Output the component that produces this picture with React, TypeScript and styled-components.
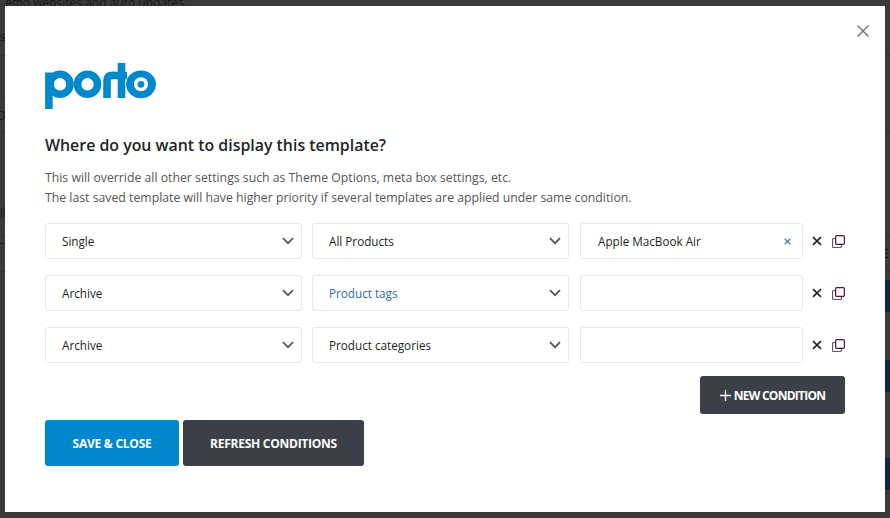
import React from "react";
import styled, {createGlobalStyle} from "styled-components";

const GlobalStyle = createGlobalStyle`
  html, body {
    margin: 0;
    padding: 0;
    height: 100%;
    overflow: hidden;
    background: #3a3a3a;
    font-family: "Open Sans", "Liberation Sans", sans-serif;
  }
  * {
    box-sizing: border-box;
  }
`

// the dimmed page behind the modal, only its edges show
const Backdrop = styled.div`
  position: fixed;
  inset: 0;
  overflow: hidden;
  display: flex;
  justify-content: space-between;
  background: #3a3a3a;
`

const BackdropEdge = styled.div`
  width: 5px;
  display: flex;
  flex-direction: column;
`

const Segment = styled.div<{ $height: number, $line?: string, $fill?: string }>`
  height: ${p => p.$height}px;
  flex-shrink: 0;
  border-bottom: ${p => p.$line ? `1px solid ${p.$line}` : "0"};
  background: ${p => p.$fill || "transparent"};
`

const SegmentText = styled.div<{ $top: number, $left: number }>`
  margin: ${p => p.$top}px 0 0 ${p => p.$left}px;
  font-size: 12px;
  line-height: 18px;
  white-space: nowrap;
  color: #161616;
`

const MenuDashes = styled.div`
  padding-top: 13px;
  display: flex;
  flex-direction: column;
  gap: 3px;
`

const MenuDash = styled.div`
  width: 3px;
  height: 1px;
  background: #111;
`

const Overlay = styled.div`
  position: fixed;
  inset: 0;
  padding: 6px 5px;
`

const Modal = styled.div`
  position: relative;
  width: 880px;
  height: 506px;
  background: #fff;
  padding: 57px 40px 0;
`

const CloseButton = styled.button`
  position: absolute;
  top: 17px;
  right: 14px;
  width: 16px;
  height: 16px;
  padding: 0;
  border: 0;
  background: none;
  display: flex;
  align-items: center;
  justify-content: center;
  color: #777;
`

const Logo = styled.svg`
  display: block;
  width: 112px;
  height: 47px;
`

const Title = styled.h2`
  margin: 23px 0 0;
  font-size: 15.9px;
  line-height: 24px;
  font-weight: 600;
  color: #222529;
`

const Description = styled.p`
  margin: 11px 0 0;
  font-size: 12.27px;
  line-height: 20px;
  color: #555;
`

const Rows = styled.div`
  margin-top: 15px;
  display: flex;
  flex-direction: column;
  gap: 16px;
`

const Row = styled.div`
  display: grid;
  grid-template-columns: 267px 268px 223px auto;
  align-items: center;
`

const Field = styled.div<{ $accent?: boolean, $input?: boolean }>`
  width: ${p => p.$input ? 223 : 257}px;
  height: 36px;
  padding: 0 ${p => p.$input ? 11 : 7}px 0 ${p => p.$input ? 17 : 16}px;
  display: flex;
  align-items: center;
  justify-content: space-between;
  border: 1px solid #e7e7e7;
  border-radius: 3px;
  font-size: 11.7px;
  font-weight: 500;
  color: ${p => p.$accent ? "#2f6cab" : "#1c1f23"};
`

const RowActions = styled.div`
  display: flex;
  align-items: center;
  gap: 10px;
  margin-left: 9px;
`

const IconButton = styled.span`
  display: flex;
  align-items: center;
  justify-content: center;
  line-height: 0;
`

const ConditionFooter = styled.div`
  margin-top: 13px;
  display: flex;
  justify-content: flex-end;
`

const Button = styled.button<{ $primary?: boolean, $tight?: boolean, $height: number, $width: number }>`
  width: ${p => p.$width}px;
  height: ${p => p.$height}px;
  padding: 0;
  display: flex;
  align-items: center;
  justify-content: center;
  gap: 3px;
  border: 0;
  border-radius: 3px;
  background: ${p => p.$primary ? "#0088cc" : "#3a3f48"};
  color: #fff;
  font-family: inherit;
  font-size: 12px;
  font-weight: 700;
  letter-spacing: ${p => p.$tight ? "-0.76px" : "-0.25px"};
`

const Actions = styled.div`
  margin-top: 6px;
  display: flex;
  gap: 4px;
`

const Chevron = () => (
  <svg width="12" height="8" viewBox="0 0 12 8" fill="none">
    <path d="M1 1.2 6 6.2 11 1.2" stroke="#555" strokeWidth="1.7"/>
  </svg>
)

const CrossIcon = () => (
  <svg width="10" height="10" viewBox="0 0 10 10" fill="none">
    <path d="M1 1.2 9 8.8M9 1.2 1 8.8" stroke="#1d2327" strokeWidth="1.6"/>
  </svg>
)

const CopyIcon = () => (
  <svg width="13" height="13" viewBox="0 0 13 13" fill="none">
    <path d="M3.5 3.5H1.7C1 3.5.5 4 .5 4.7v6.6c0 .7.5 1.2 1.2 1.2h6.6c.7 0 1.2-.5 1.2-1.2V9.5" stroke="#5a5a5a" strokeWidth="1.2"/>
    <rect x="3.6" y=".6" width="8.8" height="8.8" rx="1.2" stroke="#54123a" strokeWidth="1.2"/>
  </svg>
)

const GREY_LINE = "#303030";
const NAVY_LINE = "#173a55";
const NAVY_FILL = "#13253a";

const leftEdge = [
  {height: 28, text: "emo websites and auto updates.", top: -6, left: 5},
  {height: 28, line: GREY_LINE, text: "s", top: 0, left: 0},
  {height: 42, line: GREY_LINE},
  {height: 35, line: GREY_LINE, text: "D", top: 9, left: -3},
  {height: 66, line: NAVY_LINE},
  {height: 29, line: NAVY_LINE, text: "il", top: 5, left: 0},
  {height: 9, line: GREY_LINE, text: "-", top: 6, left: 0},
  {height: 35, line: GREY_LINE},
]

const rightEdge = [
  {height: 56, line: GREY_LINE},
  {height: 77, line: GREY_LINE},
  {height: 103, line: GREY_LINE},
  {height: 36, line: GREY_LINE, dashes: true},
  {height: 8},
  {height: 32, fill: NAVY_FILL},
  {height: 48},
  {height: 32, fill: NAVY_FILL},
  {height: 66},
  {height: 32, fill: NAVY_FILL},
]

const rows = [
  {type: "Single", scope: "All Products", value: "Apple MacBook Air"},
  {type: "Archive", scope: "Product tags", accent: true},
  {type: "Archive", scope: "Product categories"},
]

const App = () => {
  return (
    <>
      <GlobalStyle/>
      <Backdrop>
        <BackdropEdge>
          {leftEdge.map((s, i) => (
            <Segment key={i} $height={s.height} $line={s.line}>
              {s.text && <SegmentText $top={s.top || 0} $left={s.left || 0}>{s.text}</SegmentText>}
            </Segment>
          ))}
        </BackdropEdge>
        <BackdropEdge>
          {rightEdge.map((s, i) => (
            <Segment key={i} $height={s.height} $line={s.line} $fill={s.fill}>
              {s.dashes && (
                <MenuDashes>
                  <MenuDash/>
                  <MenuDash/>
                  <MenuDash/>
                </MenuDashes>
              )}
            </Segment>
          ))}
        </BackdropEdge>
      </Backdrop>
      <Overlay>
        <Modal>
          <CloseButton aria-label="Close">
            <svg width="12" height="12" viewBox="0 0 12 12" fill="none">
              <path d="M.5.5 11.5 11.5M11.5.5.5 11.5" stroke="currentColor" strokeWidth="1.5"/>
            </svg>
          </CloseButton>
          <Logo viewBox="0 0 112 47" fill="none" role="img" aria-label="porto">
            <g stroke="#0088cc" strokeWidth="7.6">
              <circle cx="15" cy="21.3" r="10"/>
              <path d="M3.9 9.5V46"/>
              <circle cx="42.5" cy="21.3" r="10"/>
              <path d="M62 35V18c0-4 2-5.6 6-5.6h2"/>
              <path d="M76.5 0v35M70 12.5h12"/>
            </g>
            <ellipse cx="96" cy="21.3" rx="14.9" ry="13.9" fill="#0088cc"/>
            <circle cx="96" cy="21.3" r="7" fill="#fff"/>
            <circle cx="96" cy="21.3" r="3.4" fill="#0088cc"/>
          </Logo>
          <Title>Where do you want to display this template?</Title>
          <Description>
            This will override all other settings such as Theme Options, meta box settings, etc.<br/>
            The last saved template will have higher priority if several templates are applied under same condition.
          </Description>
          <Rows>
            {rows.map((row, i) => (
              <Row key={i}>
                <Field>{row.type}<Chevron/></Field>
                <Field $accent={row.accent}>{row.scope}<Chevron/></Field>
                <Field $input>
                  {row.value}
                  {row.value && (
                    <svg width="7" height="7" viewBox="0 0 7 7" fill="none">
                      <path d="M.7.7 6.3 6.3M6.3.7.7 6.3" stroke="#4a7cb0" strokeWidth="1.3"/>
                    </svg>
                  )}
                </Field>
                <RowActions>
                  <IconButton><CrossIcon/></IconButton>
                  <IconButton><CopyIcon/></IconButton>
                </RowActions>
              </Row>
            ))}
          </Rows>
          <ConditionFooter>
            <Button $tight $width={145} $height={38}>
              <svg width="11" height="11" viewBox="0 0 11 11" fill="none">
                <path d="M5.5 0v11M0 5.5h11" stroke="#fff" strokeWidth="1.3"/>
              </svg>
              NEW CONDITION
            </Button>
          </ConditionFooter>
          <Actions>
            <Button $primary $width={134} $height={46}>SAVE &amp; CLOSE</Button>
            <Button $width={181} $height={46}>REFRESH CONDITIONS</Button>
          </Actions>
        </Modal>
      </Overlay>
    </>
  );
};

export default App;
